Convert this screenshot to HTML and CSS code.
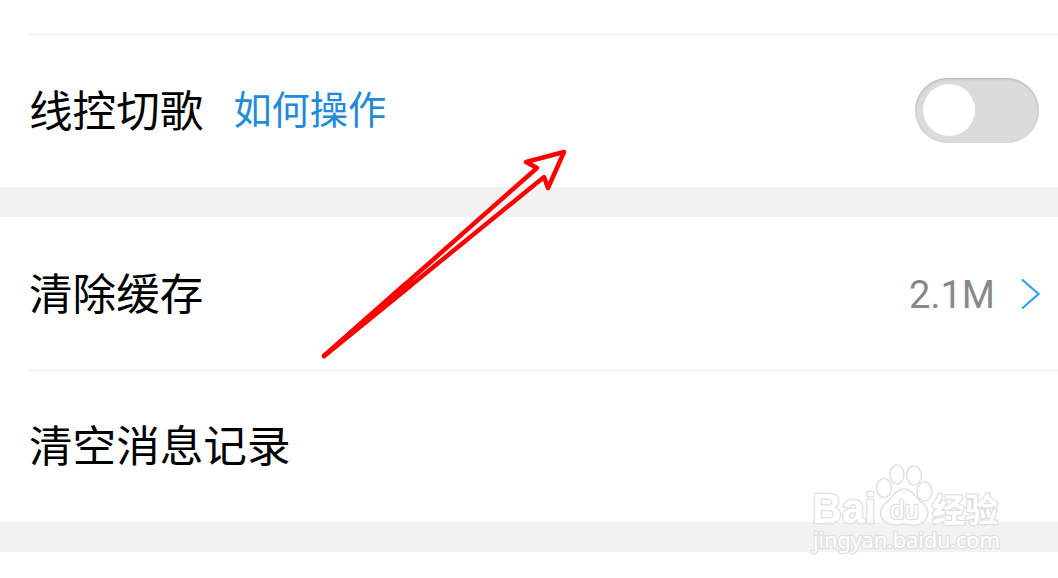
FILE: index.html
```
<!DOCTYPE html>
<html lang="zh-CN">
<head>
  <meta charset="UTF-8" />
  <meta name="viewport" content="width=device-width, initial-scale=1.0" />
  <title>设置</title>
  <link rel="stylesheet" href="styles.css">
</head>
<body>
  <div class="screen">
    <div class="group">
      <div class="row spacer"></div>
      <div class="row toggle-row">
        <span class="label">线控切歌</span>
        <a class="help">如何操作</a>
        <span class="switch"><span class="knob"></span></span>
      </div>
    </div>

    <div class="group">
      <div class="row">
        <span class="label">清除缓存</span>
        <span class="value">2.1M</span>
        <svg class="chevron" width="20" height="32" viewBox="0 0 20 32">
          <path d="M2 1.500L18.500 16L2 30.500" />
        </svg>
      </div>
      <div class="row last">
        <span class="label">清空消息记录</span>
      </div>
    </div>

    <div class="group next"></div>

    <svg class="arrow" width="250" height="216" viewBox="0 0 250 216">
      <path d="M4 211L217 23L206 17L244 7L228 43L224 32Z" />
      <path class="tail" d="M4 211L86 138.500L90 141Z" />
    </svg>

    <svg class="watermark" width="200" height="100" viewBox="0 0 200 100">
      <g class="paw">
        <ellipse cx="74" cy="28" rx="7.500" ry="9.500" />
        <ellipse cx="87" cy="14.500" rx="7" ry="9.500" />
        <ellipse cx="104" cy="15.500" rx="7.500" ry="9.500" />
        <ellipse cx="114.500" cy="31.500" rx="7.500" ry="9.500" />
        <path d="M94 29C86 29 83 37 77 42C71 47 69 53 72 58C76 66 86 65 94 64C102 65 112 67 116 59C120 52 117 46 111 42C105 37 102 29 94 29Z" />
      </g>
      <text class="brand" x="2" y="63" textLength="64" lengthAdjust="spacingAndGlyphs">Bai</text>
      <text class="du" x="80" y="59" textLength="29" lengthAdjust="spacingAndGlyphs">du</text>
      <text class="cn" x="122" y="62" textLength="66">经验</text>
      <text class="site" x="3" y="88" textLength="187">jingyan.baidu.com</text>
    </svg>
  </div>
</body>
</html>
```
FILE: styles.css
```
* { box-sizing: border-box; }
body {
  margin: 0;
  font-family: "Noto Sans CJK SC", sans-serif;
  background: #f2f2f2;
  color: #000;
}
.screen {
  position: relative;
  height: 578px;
  overflow: hidden;
}
.group {
  background: #fff;
  margin-bottom: 30px;
}
.row {
  display: flex;
  align-items: center;
  height: 154px;
  margin-left: 29px;
  padding-right: 18px;
  border-bottom: 1px solid #e9e9e9;
}
.row.spacer {
  height: 35px;
}
.row.toggle-row {
  height: 152px;
  padding-right: 19px;
  padding-bottom: 1px;
  border-bottom: none;
}
.row.last {
  height: 151px;
  padding-bottom: 2px;
  border-bottom: none;
}
.group.next {
  height: 26px;
  margin-bottom: 0;
}
.label {
  padding-bottom: 6px;
  font-size: 43.6px;
  line-height: 60px;
}
.help {
  margin-left: 30px;
  padding-bottom: 5px;
  font-size: 38.2px;
  line-height: 60px;
  color: #218bdb;
}
.switch {
  width: 124px;
  height: 65px;
  margin-left: auto;
  padding: 6px 8px;
  border-radius: 33px;
  background: #dbdbdb;
  box-shadow: inset 0 1px 3px rgba(0,0,0,0.2);
}
.knob {
  display: block;
  width: 52px;
  height: 52px;
  border-radius: 50%;
  background: #fff;
}
.value {
  margin-left: auto;
  padding-top: 2px;
  font-family: Roboto, sans-serif;
  font-size: 38px;
  color: #888;
}
.chevron {
  margin-left: 25px;
}
.chevron path {
  fill: none;
  stroke: #33a0f5;
  stroke-width: 2.2;
}
.arrow {
  position: absolute;
  left: 320px;
  top: 145px;
}
.arrow path {
  fill: none;
  stroke: #f00;
  stroke-width: 4.5;
  stroke-linejoin: round;
}
.arrow .tail {
  fill: #f00;
}
.watermark {
  position: absolute;
  left: 810px;
  top: 460px;
  fill: #fff;
  stroke: #e0e0e0;
  stroke-width: 1.5;
}
.watermark text {
  paint-order: stroke;
  stroke-width: 2.5;
  stroke-linejoin: round;
}
.brand {
  font: bold 42px "Liberation Sans", sans-serif;
}
.du {
  font: 25px "Liberation Sans", sans-serif;
}
.cn {
  font: bold 33px "Noto Sans CJK SC", sans-serif;
}
.site {
  font: 22px "Noto Sans", sans-serif;
}
```
